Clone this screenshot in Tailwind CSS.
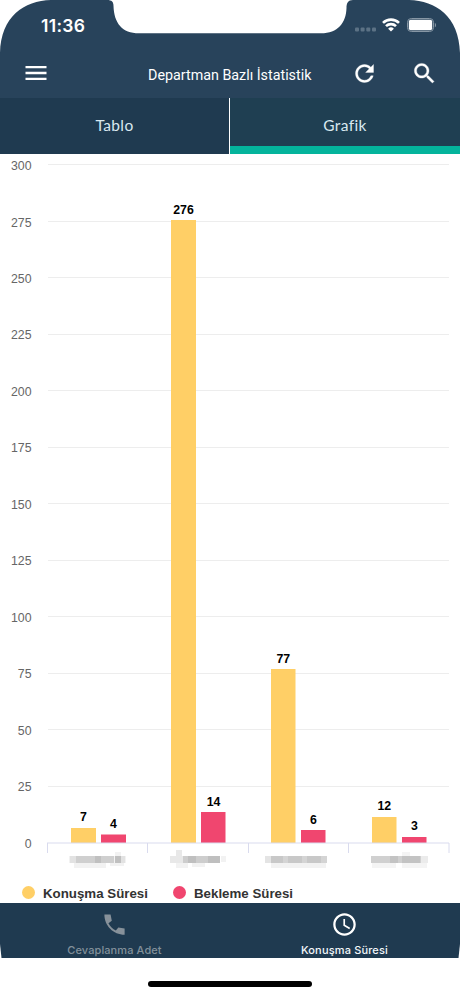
<!DOCTYPE html>
<html lang="tr">
<head>
  <meta charset="UTF-8">
  <meta name="viewport" content="width=device-width, initial-scale=1.0">
  <title>Departman Bazlı İstatistik</title>
  <script src="https://cdn.jsdelivr.net/npm/@tailwindcss/browser@4"></script>
</head>
<body class="bg-white">
  <div class="relative flex flex-col w-[460px] h-[996px] overflow-hidden font-['Roboto',sans-serif]">

    <!-- Header -->
    <header class="h-[98px] bg-[#28435b] text-white">
      <div class="flex items-center justify-between h-[50px] pl-[41px] pr-[23px]">
        <span class="font-['Inter',sans-serif] font-semibold text-[17.5px] leading-none tracking-[0.3px] pt-px">11:36</span>
        <div class="flex items-center">
          <svg class="w-[22px] h-[14px] mr-[5px]" viewBox="0 0 22 14" fill="#5c7285">
            <rect x="0" y="9.5" width="4" height="4" rx="1"/>
            <rect x="5.6" y="9.5" width="4" height="4" rx="1"/>
            <rect x="11.3" y="9.5" width="4" height="4" rx="1"/>
            <rect x="17" y="9.5" width="4" height="4" rx="1"/>
          </svg>
          <svg class="w-[18px] h-[14px] mr-[7px]" viewBox="0 0 18 14" fill="none" stroke="#fff" stroke-width="2.6">
            <path d="M1 4.9a11.4 11.4 0 0 1 16 0"/>
            <path d="M4 8.2a7.1 7.1 0 0 1 10 0"/>
            <path d="M9 13.6 6.1 10.8a4.1 4.1 0 0 1 5.8 0z" fill="#fff" stroke="none"/>
          </svg>
          <svg class="w-[30px] h-[14px]" viewBox="0 0 30 14">
            <rect x=".5" y=".5" width="26" height="13" rx="3.8" fill="none" stroke="#8797a5"/>
            <rect x="1.8" y="1.8" width="23.4" height="10.4" rx="2" fill="#fff"/>
            <path d="M27.8 4.8v4.6c1.7-.9 1.7-3.7 0-4.6z" fill="#8797a5"/>
          </svg>
        </div>
      </div>
      <div class="flex items-center h-[46px] pl-[22px] pr-[22px]">
        <svg class="w-[28px] h-[28px]" viewBox="0 0 24 24" fill="#fff"><path d="M3 18h18v-2H3v2zm0-5h18v-2H3v2zm0-7v2h18V6H3z"/></svg>
        <h1 class="ml-[98px] w-[203px] text-[14.3px] leading-none whitespace-nowrap pt-[5px]">Departman Bazlı İstatistik</h1>
        <svg class="w-[27px] h-[27px] shrink-0" viewBox="0 0 24 24" fill="#fff" stroke="#fff" stroke-width=".3"><path d="M17.65 6.35C16.2 4.9 14.21 4 12 4c-4.42 0-7.99 3.58-7.99 8s3.57 8 7.99 8c3.73 0 6.84-2.55 7.73-6h-2.08c-.82 2.33-3.04 4-5.65 4-3.31 0-6-2.69-6-6s2.69-6 6-6c1.66 0 3.14.69 4.22 1.78L13 11h7V4l-2.35 2.35z"/></svg>
        <svg class="w-[27px] h-[27px] ml-auto shrink-0" viewBox="0 0 24 24" fill="#fff" stroke="#fff" stroke-width=".3"><path d="M15.5 14h-.79l-.28-.27C15.41 12.59 16 11.11 16 9.5 16 5.91 13.09 3 9.5 3S3 5.91 3 9.5 5.91 16 9.5 16c1.61 0 3.09-.59 4.23-1.57l.27.28v.79l5 4.99L20.49 19l-4.99-5zm-6 0C7.01 14 5 11.99 5 9.5S7.01 5 9.5 5 14 7.01 14 9.5 11.99 14 9.5 14z"/></svg>
      </div>
    </header>

    <!-- Tabs -->
    <nav class="flex h-[56px] text-[15.5px] tracking-[0.4px] font-['Lato',sans-serif] text-[#d9e9f0]">
      <a class="flex items-center justify-center w-[229px] pb-px bg-[#1f3a50]">Tablo</a>
      <a class="flex items-center justify-center flex-1 ml-px bg-[#1f3f52] border-b-[8px] border-[#04b49c] pt-[7px]">Grafik</a>
    </nav>

    <!-- Chart -->
    <main class="h-[749px]">
      <svg class="block w-[460px] h-[726px] font-['Liberation_Sans',sans-serif]" viewBox="0 154 460 726">
        <path stroke="#ededed" d="M48 164.5h401M48 221.5h401M48 277.5h401M48 334.5h401M48 390.5h401M48 447.5h401M48 503.5h401M48 560.5h401M48 616.5h401M48 673.5h401M48 729.5h401M48 786.5h401"/>
        <g fill="#666" font-size="12.3" text-anchor="end">
          <text x="31.5" y="170">300</text>
          <text x="31.5" y="227">275</text>
          <text x="31.5" y="283">250</text>
          <text x="31.5" y="339">225</text>
          <text x="31.5" y="396">200</text>
          <text x="31.5" y="452">175</text>
          <text x="31.5" y="509">150</text>
          <text x="31.5" y="565">125</text>
          <text x="31.5" y="622">100</text>
          <text x="31.5" y="678">75</text>
          <text x="31.5" y="735">50</text>
          <text x="31.5" y="791">25</text>
          <text x="31.5" y="848">0</text>
        </g>
        <g fill="#ffcf66">
          <rect x="71" y="828" width="25" height="15"/>
          <rect x="171" y="220" width="25" height="623"/>
          <rect x="271" y="669" width="24.5" height="174"/>
          <rect x="372" y="817" width="24.5" height="26"/>
        </g>
        <g fill="#f0466f">
          <rect x="101" y="834.5" width="25" height="8.5"/>
          <rect x="201" y="812" width="24.5" height="31"/>
          <rect x="301" y="830" width="24.5" height="13"/>
          <rect x="402" y="837" width="24.5" height="6"/>
        </g>
        <path fill="none" stroke="#d9dbee" d="M47.5 853v-10M147.5 853v-10M248.5 853v-10M348.5 853v-10M449 853v-10M47 843h402"/>
        <g fill="#000" font-size="12.3" font-weight="bold" text-anchor="middle">
          <text x="83.5" y="821">7</text>
          <text x="113.5" y="828">4</text>
          <text x="183.5" y="213.5">276</text>
          <text x="213.5" y="805.5">14</text>
          <text x="283.3" y="662.5">77</text>
          <text x="313.5" y="823.5">6</text>
          <text x="384.3" y="810">12</text>
          <text x="414.3" y="830">3</text>
        </g>
        <!-- masked department names -->
        <g>
          <path fill="#f2f2f2" d="M69 856h57v7H69zM74 863h32v5H74zM110 863h14v3h-14zM115 852h6v4h-6z"/>
          <path fill="#cfcfcf" d="M76 856h38v7H76z"/>
          <path fill="#c0c0c0" d="M95 856h6v7h-6zM115 856h6v7h-6z"/>
          <path fill="#e2e2e2" d="M70 856h6v7h-6zM121 856h4v7h-4z"/>
          <path fill="#e8e8e8" d="M170 856h13v7h-13zM176 850h6v6h-6z"/>
          <path fill="#f2f2f2" d="M176 863h12v5H176zM192 863h13v4h-13zM221 856h5v6h-5z"/>
          <path fill="#cdcdcd" d="M183 856h37v7H183z"/>
          <path fill="#bfbfbf" d="M188 856h8v7h-8zM208 856h12v7h-12z"/>
          <path fill="#e4e4e4" d="M265 856h62v7H265z"/>
          <path fill="#f2f2f2" d="M271 863h55v5H271z"/>
          <path fill="#c8c8c8" d="M271 856h12v7H271zM288 856h14v7H288zM307 856h14v7H307z"/>
          <path fill="#d4d4d4" d="M283 856h5v7h-5zM302 856h5v7h-5zM321 856h6v7h-6z"/>
          <path fill="#ebebeb" d="M371 856h57v7H371z"/>
          <path fill="#f4f4f4" d="M372 863h24v5H372zM402 863h25v5H402zM402 852h8v4h-8z"/>
          <path fill="#d0d0d0" d="M371 856h50v7H371z"/>
          <path fill="#c3c3c3" d="M390 856h8v7h-8zM402 856h18v7H402z"/>
        </g>
      </svg>
      <div class="flex items-center h-[23px] pl-[22px] pt-[4px] font-['Liberation_Sans',sans-serif] font-bold text-[13.3px] leading-none text-[#333] whitespace-nowrap">
        <span class="w-[13px] h-[13px] -mt-[3px] rounded-full bg-[#ffcf66]"></span>
        <span class="ml-[8px] w-[130px]">Konuşma Süresi</span>
        <span class="w-[13px] h-[13px] -mt-[3px] rounded-full bg-[#f0466f]"></span>
        <span class="ml-[8px]">Bekleme Süresi</span>
      </div>
    </main>

    <!-- Bottom tabs -->
    <footer class="flex h-[55px] bg-[#1f3a50] font-['Inter',sans-serif] font-medium text-[11px] leading-none">
      <a class="flex flex-col items-center w-[229px] pt-[8px] text-[#82909a] tracking-[0.1px]">
        <svg class="w-[27px] h-[27px]" viewBox="0 0 24 24" fill="#87919a"><path d="M3 3h5.500l1.100 5.600-2.980 2.190c1.440 2.830 3.760 5.140 6.590 6.590l2.200-2.800L21 15.500V21C11 21 3 13 3 3z"/></svg>
        <span class="mt-[7px]">Cevaplanma Adet</span>
      </a>
      <a class="flex flex-col items-center w-[231px] pt-[8px] text-[#f3f7fa] tracking-[0.15px]">
        <svg class="w-[27px] h-[27px]" viewBox="0 0 24 24" fill="#fff"><path d="M11.99 2C6.47 2 2 6.48 2 12s4.47 10 9.99 10C17.52 22 22 17.52 22 12S17.52 2 11.99 2zM12 20c-4.42 0-8-3.58-8-8s3.58-8 8-8 8 3.58 8 8-3.58 8-8 8zm.5-13H11v6l5.25 3.15.75-1.23-4.5-2.67z"/></svg>
        <span class="mt-[7px]">Konuşma Süresi</span>
      </a>
    </footer>

    <!-- Home indicator -->
    <div class="flex justify-center pt-[23px]">
      <div class="w-[164px] h-[6px] rounded-full bg-black"></div>
    </div>

    <!-- Device notch and rounded corners -->
    <svg class="absolute top-0 left-0 w-[460px] h-[60px]" viewBox="0 0 460 60" fill="#fff">
      <path d="M0 0h51C24 1 1 16 0 53z"/>
      <path d="M460 0h-51c27 1 50 16 51 53z"/>
      <path d="M107 0c5 0 6.5 2 6.5 6C114 23 122 33.3 139 33.3H321C338 33.3 346 23 346.5 8C346.5 3 348 0 353 0z"/>
    </svg>
    <svg class="absolute top-[940px] left-0 w-[460px] h-[18px]" viewBox="0 0 460 18" fill="#fff">
      <path d="M0 4v14h1.5z"/>
      <path d="M460 4v14h-1.5z"/>
    </svg>
  </div>
</body>
</html>
